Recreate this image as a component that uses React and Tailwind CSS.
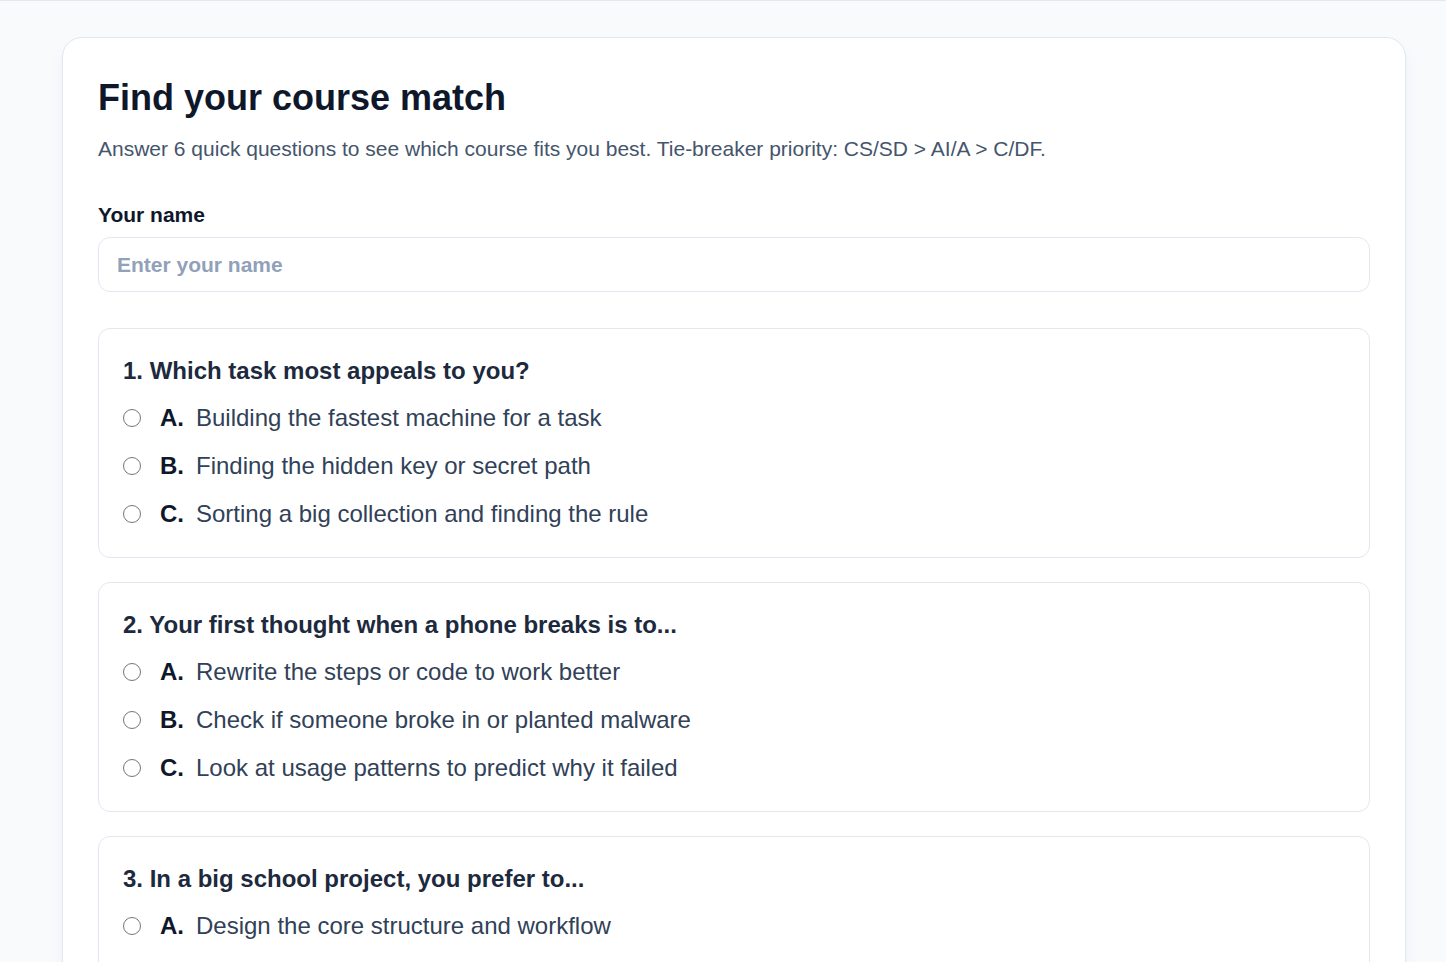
import React from 'react';

const questions = [
  {
    q: '1. Which task most appeals to you?',
    options: [
      ['A.', 'Building the fastest machine for a task'],
      ['B.', 'Finding the hidden key or secret path'],
      ['C.', 'Sorting a big collection and finding the rule'],
    ],
  },
  {
    q: '2. Your first thought when a phone breaks is to...',
    options: [
      ['A.', 'Rewrite the steps or code to work better'],
      ['B.', 'Check if someone broke in or planted malware'],
      ['C.', 'Look at usage patterns to predict why it failed'],
    ],
  },
  {
    q: '3. In a big school project, you prefer to...',
    options: [
      ['A.', 'Design the core structure and workflow'],
      ['B.', 'Protect the shared files and check access'],
      ['C.', 'Analyse the survey results and find trends'],
    ],
  },
];

function Question({ q, options }) {
  return (
    <div className="rounded-xl border border-slate-200 bg-white px-6 pt-[26px] pb-[27px]">
      <h3 className="text-2xl leading-8 font-bold text-slate-800">{q}</h3>
      <div className="mt-[15px] space-y-4">
        {options.map(([letter, text]) => (
          <label key={letter} className="flex items-center h-8 cursor-pointer">
            <span className="w-[18px] h-[18px] rounded-full border border-[#767676] bg-white shrink-0" />
            <span className="ml-[19px] w-9 font-bold text-slate-900 text-2xl">{letter}</span>
            <span className="text-2xl text-slate-700">{text}</span>
          </label>
        ))}
      </div>
    </div>
  );
}

export default function App() {
  return (
    <div className="min-h-screen bg-slate-50 border-t border-slate-200 pt-9 pl-[62px] pr-10 font-['Liberation_Sans',Arial,sans-serif]">
      <div className="rounded-[20px] border border-slate-200 bg-white shadow-lg shadow-slate-200/60 px-[35px] pt-[40px] pb-10">
        <h1 className="text-4xl font-bold text-slate-900">Find your course match</h1>
        <p className="mt-[17px] text-[21px] leading-7 text-slate-600">
          Answer 6 quick questions to see which course fits you best. Tie-breaker priority: CS/SD &gt; AI/A &gt; C/DF.
        </p>
        <label className="block mt-[38px] text-[21px] leading-7 font-bold text-slate-900">Your name</label>
        <input
          type="text"
          placeholder="Enter your name"
          className="mt-2 w-full h-[55px] rounded-xl border border-slate-200 px-[18px] text-[21px] font-bold text-slate-800 placeholder:text-slate-400 outline-none"
        />
        <div className="mt-[36px] space-y-6">
          {questions.map((item) => (
            <Question key={item.q} {...item} />
          ))}
        </div>
      </div>
    </div>
  );
}
